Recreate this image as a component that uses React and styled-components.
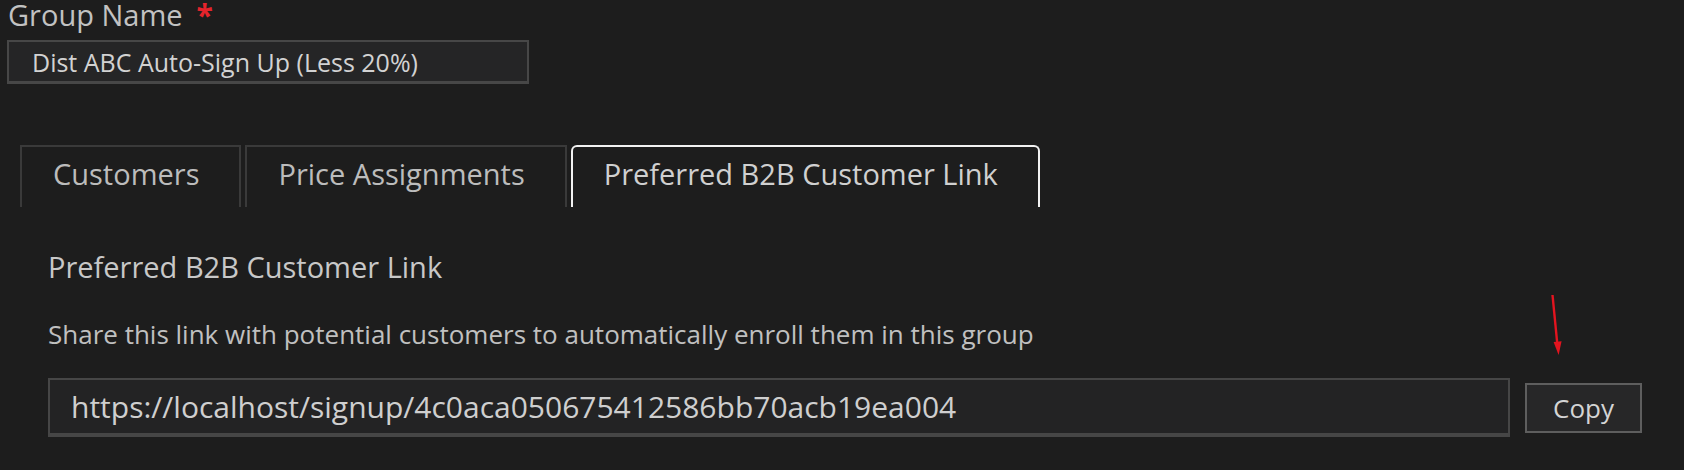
import React from "react";
import styled, { createGlobalStyle } from "styled-components";

const tabs = ["Customers", "Price Assignments", "Preferred B2B Customer Link"];
const signupLink = "https://localhost/signup/4c0aca050675412586bb70acb19ea004";

const App = () => {
  return (
    <Page>
      <GlobalStyle />
      {/* Group name field */}
      <Label>
        Group Name<Required>*</Required>
      </Label>
      <NameInput readOnly defaultValue="Dist ABC Auto-Sign Up (Less 20%)" />

      {/* Tabs */}
      <TabBar>
        {tabs.map((tab, index) => (
          <Tab key={`tab${index}`} $active={index === tabs.length - 1}>
            {tab}
          </Tab>
        ))}
      </TabBar>

      {/* Link panel */}
      <Panel>
        <PanelTitle>Preferred B2B Customer Link</PanelTitle>
        <PanelText>
          Share this link with potential customers to automatically enroll them in this group
        </PanelText>
        <LinkRow>
          <LinkInput readOnly defaultValue={signupLink} />
          <CopyButton>
            <Arrow width="14" height="62" viewBox="0 0 14 62">
              <path d="M3.5 0 L8.5 51" stroke="#e3141f" strokeWidth="2.4" fill="none" />
              <path d="M4.6 47 L12.6 46.2 L9.6 60 Z" fill="#e3141f" />
            </Arrow>
            Copy
          </CopyButton>
        </LinkRow>
      </Panel>
    </Page>
  );
};

const GlobalStyle = createGlobalStyle`
  html, body {
    margin: 0;
    background: #1d1d1d;
  }
  body {
    font-family: "Open Sans", "Liberation Sans", sans-serif;
    color: #c4c4c4;
  }
`;

const Page = styled.div`
  width: 1684px;
  height: 470px;
  padding-left: 7px;
  box-sizing: border-box;
  overflow: hidden;
  background: #1d1d1d;
`;

const Label = styled.div`
  font-size: 29px;
  line-height: 29px;
  height: 40px;
  padding-left: 1px;
  color: #c2c2c2;
`;

const Required = styled.span`
  margin-left: 14px;
  color: #e5242c;
  font-size: 30px;
  font-weight: 700;
`;

const NameInput = styled.input`
  display: block;
  width: 522px;
  height: 44px;
  box-sizing: border-box;
  padding: 0 0 0 23px;
  margin: 0;
  background: #252526;
  border: 2px solid #474747;
  border-bottom-width: 3px;
  color: #d2d2d2;
  font-family: "Open Sans", "Liberation Sans", sans-serif;
  font-size: 25px;
  outline: none;
`;

const TabBar = styled.div`
  display: flex;
  gap: 4px;
  margin: 61px 0 0 13px;
`;

const Tab = styled.div`
  height: 62px;
  box-sizing: border-box;
  padding: 0 40px 8px 31px;
  display: flex;
  align-items: center;
  font-size: 29px;
  color: ${(p) => (p.$active ? "#d0d0d0" : "#bcbcbc")};
  border: 2px solid ${(p) => (p.$active ? "#f2f2f2" : "#3a3a3a")};
  border-bottom: none;
  border-radius: ${(p) => (p.$active ? "6px 6px 0 0" : "0")};
`;

const Panel = styled.div`
  padding: 42px 0 0 41px;
  display: flex;
  flex-direction: column;
`;

const PanelTitle = styled.div`
  font-size: 29px;
  line-height: 36px;
  color: #c8c8c8;
`;

const PanelText = styled.div`
  margin-top: 31px;
  font-size: 26px;
  line-height: 36px;
  color: #c0c0c0;
`;

const LinkRow = styled.div`
  display: flex;
  align-items: center;
  gap: 15px;
  margin-top: 26px;
`;

const LinkInput = styled.input`
  width: 1462px;
  height: 59px;
  box-sizing: border-box;
  margin: 0;
  padding: 0 0 0 21px;
  background: #232324;
  border: 2px solid #464646;
  border-bottom-width: 4px;
  color: #cfcfcf;
  font-family: "Open Sans", "Liberation Sans", sans-serif;
  font-size: 30px;
  outline: none;
`;

const CopyButton = styled.button`
  position: relative;
  width: 117px;
  height: 50px;
  margin: 0;
  padding: 0;
  background: #272728;
  border: 2px solid #5e5e5e;
  color: #d4d4d4;
  font-family: "Open Sans", "Liberation Sans", sans-serif;
  font-size: 26px;
`;

const Arrow = styled.svg`
  position: absolute;
  left: 22px;
  top: -90px;
`;

export default App;
